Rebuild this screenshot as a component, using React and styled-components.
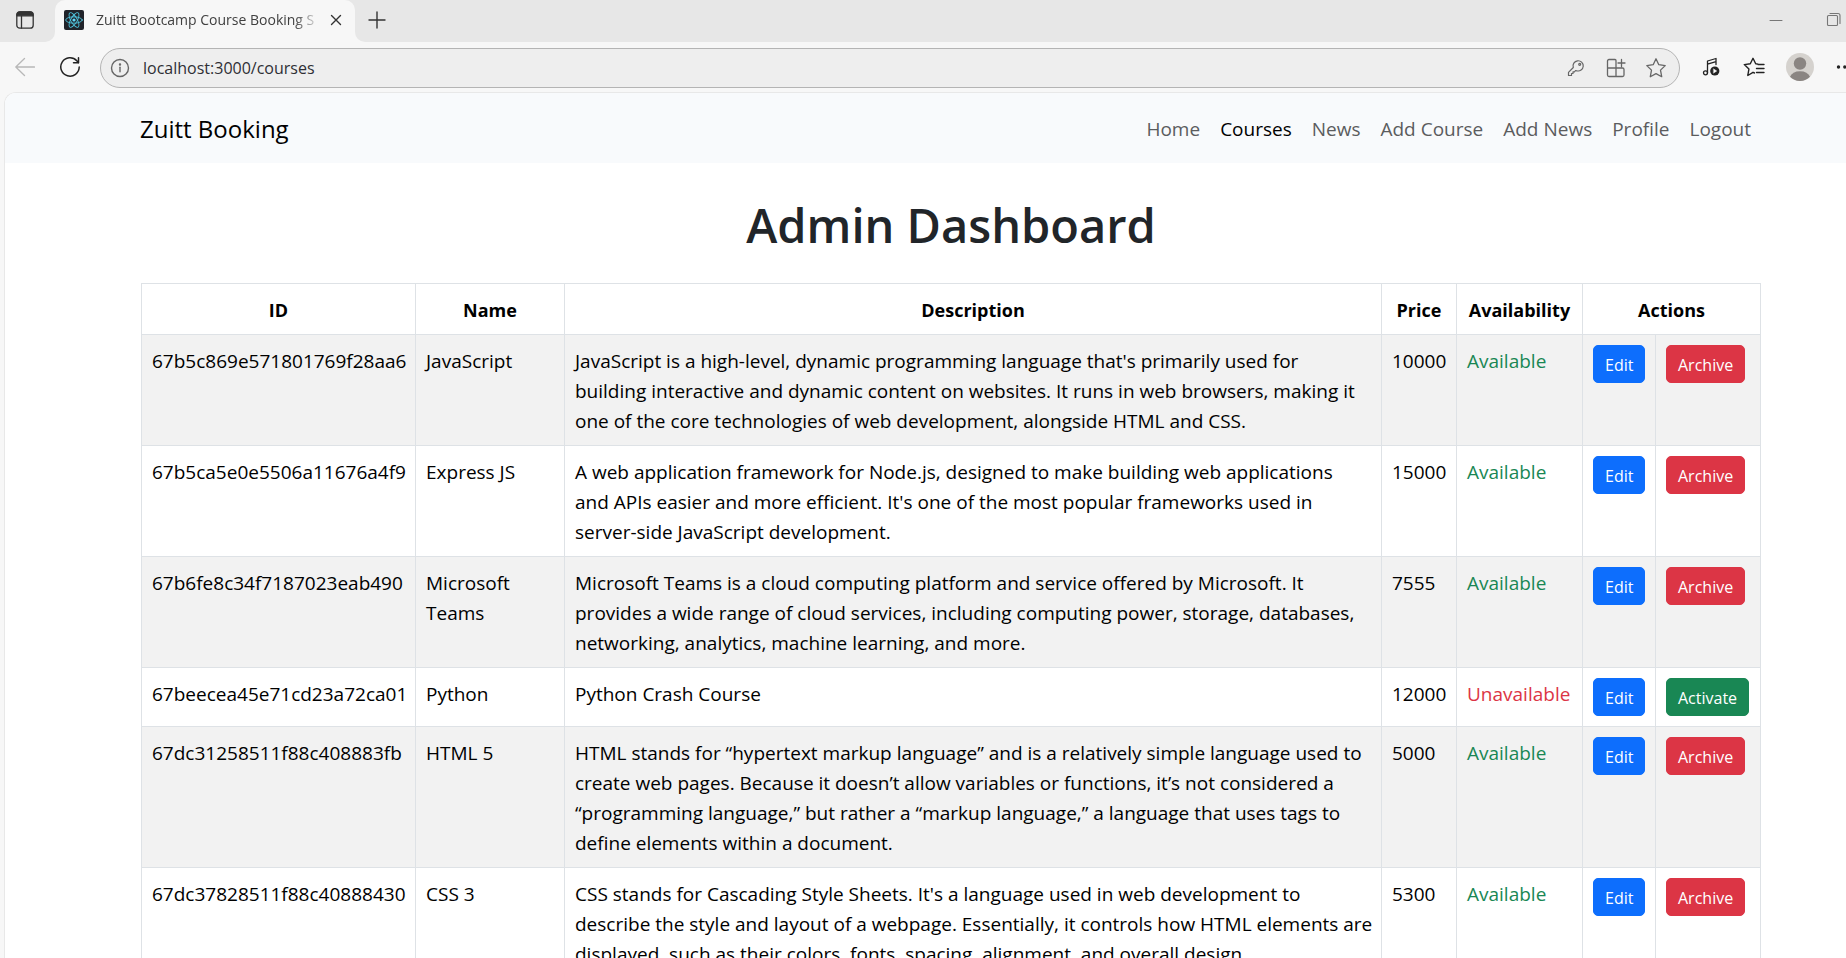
import React from "react";
import styled, { createGlobalStyle, css } from "styled-components";

const GlobalStyle = createGlobalStyle`
  *, *::before, *::after { box-sizing: border-box; }
  body {
    margin: 0;
    background: #f7f7f7;
    color: #212529;
    font-family: "Segoe UI", "Open Sans", "Noto Sans", sans-serif;
    font-size: 19px;
    line-height: 30px;
  }
  button, input { font-family: inherit; }
  svg { display: block; flex: none; }
`;

/* ---------- Browser frame ---------- */

const Window = styled.div`
  display: flex;
  flex-direction: column;
  height: 100vh;
  overflow: hidden;
`;

const TabStrip = styled.div`
  display: flex;
  height: 42px;
  flex: none;
`;

const StripStart = styled.div`
  display: flex;
  align-items: center;
  width: 55px;
  padding: 0 0 2px 15px;
  background: #e7e7e7;
  border-bottom-right-radius: 10px;
`;

const StripRest = styled.div`
  display: flex;
  flex: 1;
  align-items: center;
  padding: 0 4px 2px 12px;
  background: #e7e7e7;
  border-bottom-left-radius: 10px;
`;

const TabSlot = styled.div`
  width: 300px;
  background: linear-gradient(#e7e7e7 50%, #f7f7f7 50%);
`;

const Tab = styled.div`
  display: flex;
  align-items: center;
  height: 100%;
  padding: 0 13px 2px 9px;
  background: #f7f7f7;
  border-radius: 10px 10px 0 0;
`;

const TabTitle = styled.span`
  flex: 1;
  min-width: 0;
  margin: 0 9px 0 12px;
  overflow: hidden;
  color: #404040;
  font-size: 14px;
  line-height: 20px;
  white-space: nowrap;
  mask-image: linear-gradient(to right, #000 88%, transparent);
`;

const IconButton = styled.button`
  display: flex;
  flex: none;
  padding: 0;
  border: 0;
  background: none;
  color: ${(p) => p.$color || "#333"};
`;

const WindowControls = styled.div`
  display: flex;
  align-items: center;
  gap: 43px;
  margin-left: auto;
`;

const Toolbar = styled.div`
  display: flex;
  align-items: center;
  flex: none;
  height: 50px;
  padding-left: 15px;
`;

const History = styled.div`
  display: flex;
  gap: 25px;
  margin-right: 20px;
`;

const AddressBar = styled.label`
  display: flex;
  flex: 1;
  align-items: center;
  gap: 20px;
  height: 40px;
  margin-top: 2px;
  padding: 0 13px 0 9px;
  border: 1px solid #b4b4b4;
  border-radius: 20px;
  background: #eeeeee;
  color: #666;
`;

const AddressInput = styled.input`
  flex: 1;
  min-width: 0;
  margin-left: -7px;
  padding: 0;
  border: 0;
  outline: 0;
  background: none;
  color: #2f2f35;
  font-size: 16px;
  line-height: 24px;
`;

const Extensions = styled.div`
  display: flex;
  align-items: center;
  gap: 21px;
  margin-left: 22px;
`;

const Viewport = styled.main`
  flex: 1;
  min-height: 0;
  margin-left: 4px;
  overflow: hidden;
  border-top: 1px solid #e8e8e8;
  border-left: 1px solid #e8e8e8;
  border-top-left-radius: 12px;
  background: #fff;
`;

/* ---------- Page ---------- */

const Navbar = styled.nav`
  display: flex;
  align-items: center;
  justify-content: space-between;
  height: 70px;
  padding: 2px 85px 0 135px;
  background: #f8fafc;
`;

const Brand = styled.a`
  color: #000;
  font-size: 24px;
  line-height: 36px;
  text-decoration: none;
`;

const NavLinks = styled.div`
  display: flex;
`;

const NavLink = styled.a`
  padding: 0 10px;
  color: ${(p) => (p.$active ? "#000" : "#5b5c5e")};
  text-decoration: none;
`;

const Container = styled.section`
  padding: 32px 85px 0 136px;
`;

const Title = styled.h1`
  margin: 0 0 28px;
  color: #212529;
  font-size: 47px;
  font-weight: 600;
  line-height: 60px;
  text-align: center;
`;

const CourseTable = styled.table`
  width: 100%;
  border-collapse: collapse;
  table-layout: fixed;
  color: #000;
`;

const Column = styled.col`
  width: ${(p) => p.$width || "auto"};
`;

const cell = css`
  border: 1px solid #dee2e6;
`;

const HeadCell = styled.th`
  ${cell}
  padding: 11px 10px 9px;
  font-weight: 700;
  font-size: 18px;
`;

const Row = styled.tr`
  background: ${(p) => (p.$striped ? "#f2f2f2" : "#fff")};
`;

const Cell = styled.td`
  ${cell}
  padding: 11px 8px 9px 10px;
  vertical-align: top;
`;

const ActionCell = styled(Cell)`
  padding: 10px;
`;

const Status = styled.span`
  color: ${(p) => (p.$available ? "#198754" : "#dc3545")};
`;

const tones = { primary: "#0d6efd", danger: "#dc3545", success: "#198754" };

const ActionButton = styled.button`
  display: block;
  padding: 6px 11px 4px;
  border: 1px solid ${(p) => tones[p.$tone]};
  border-radius: 5px;
  background: ${(p) => tones[p.$tone]};
  color: #fff;
  font-size: 16px;
  line-height: 26px;
`;

/* ---------- Icons ---------- */

const Icon = ({ w = 20, h = w, sw = 1.3, children }) => (
  <svg width={w} height={h} viewBox={`0 0 ${w} ${h}`} fill="none" stroke="currentColor" strokeWidth={sw} strokeLinecap="round" strokeLinejoin="round" aria-hidden="true">
    {children}
  </svg>
);

const TabActionsIcon = () => (
  <Icon>
    <rect x="1.8" y="1.8" width="16.4" height="16.4" rx="3" />
    <path d="M2 4.500a3 3 0 0 1 3-2.700h10a3 3 0 0 1 3 2.700v1.300H2z" fill="currentColor" />
    <path d="M6.500 6v12" />
  </Icon>
);

const ReactIcon = () => (
  <Icon sw={0.9}>
    <rect width="20" height="20" rx="2" fill="#20232a" stroke="none" />
    <g stroke="#4fc3dd">
      <ellipse cx="10" cy="10" rx="8.300" ry="3.200" />
      <ellipse cx="10" cy="10" rx="8.300" ry="3.200" transform="rotate(60 10 10)" />
      <ellipse cx="10" cy="10" rx="8.300" ry="3.200" transform="rotate(120 10 10)" />
    </g>
    <circle cx="10" cy="10" r="1.600" fill="#61dafb" stroke="none" />
  </Icon>
);

const CloseIcon = () => <Icon w={12} sw={1.4}><path d="M1.500 1.500l9 9M10.500 1.500l-9 9" /></Icon>;
const PlusIcon = () => <Icon sw={1.4}><path d="M10 2v16M2 10h16" /></Icon>;
const MinimizeIcon = () => <Icon w={14} sw={1}><path d="M1 7.500h12" /></Icon>;
const RestoreIcon = () => (
  <Icon w={16} sw={1.100}>
    <rect x="1.500" y="3.500" width="10" height="10" rx="1" />
    <path d="M4 1.500h8a2 2 0 0 1 2 2v8" />
  </Icon>
);
const BackIcon = () => <Icon sw={1.300}><path d="M19.500 10H.8M9.500 1.500L.8 10l8.700 8.500" /></Icon>;
const ReloadIcon = () => (
  <Icon sw={1.500}>
    <path d="M19.200 10A9.200 9.200 0 1 1 16.800 3.800L18.300 5.600" />
    <path d="M18.500 .8v5h-5" />
  </Icon>
);
const InfoIcon = () => (
  <Icon sw={1.400}>
    <circle cx="10" cy="10" r="8.500" />
    <path d="M10 9.300v4.500" />
    <circle cx="10" cy="6.500" r=".5" fill="currentColor" />
  </Icon>
);
const KeyIcon = () => (
  <Icon sw={1.200}>
    <path d="M7.300 9.500A5.100 5.100 0 1 1 10.800 12.800L9.500 12.500 8.500 13.800H7v1.700H5.500v2H2.500v-3.200z" />
    <circle cx="13.700" cy="6.300" r="1" />
  </Icon>
);
const AppsIcon = () => (
  <Icon sw={1.300}>
    <path d="M10 10V2.500a1 1 0 0 0-1-1H3a1.500 1.500 0 0 0-1.500 1.500v14A1.500 1.500 0 0 0 3 18.500h13.500a1.500 1.500 0 0 0 1.500-1.500v-5.500a1.500 1.500 0 0 0-1.500-1.500zM1.500 10H10M10 10v8.500M15.500 1.500v7M12 5h7" />
  </Icon>
);
const StarIcon = () => (
  <Icon sw={1.300}>
    <path d="M10 .8l2.800 5.900 6.400.9-4.700 4.500 1.200 6.600L10 15.600l-5.700 3.100 1.200-6.600L.8 7.600l6.400-.9z" />
  </Icon>
);
const MusicIcon = () => (
  <Icon sw={1.300}>
    <ellipse cx="3.500" cy="15.800" rx="2" ry="2" />
    <path d="M5.500 15.800V4l8.500-2.500v6M5.500 7.200L14 4.700" />
    <circle cx="12.800" cy="14" r="4.600" fill="currentColor" stroke="none" />
    <path d="M11.700 12l3 2-3 2z" fill="#fff" stroke="#fff" strokeWidth=".5" />
  </Icon>
);
const FavoritesIcon = () => (
  <Icon w={22} h={20} sw={1.400}>
    <path d="M11.500 16l-1.500-.7-5.200 3.200 1.100-6.400L1.300 7.600l6-.9L10 1.300l2.700 5.400 2.300.4M15 7.500h6M13.500 11.500h7.500M13.500 15.500h7.500" />
  </Icon>
);
const AvatarIcon = () => (
  <svg width="28" height="28" viewBox="0 0 28 28" aria-hidden="true">
    <circle cx="14" cy="14" r="14" fill="#d5d2ce" />
    <circle cx="14" cy="10.500" r="6.200" fill="#8a8582" />
    <path d="M4 23.800a10.500 8 0 0 1 20 0A14 14 0 0 1 4 23.800z" fill="#8a8582" />
  </svg>
);
const MoreIcon = () => (
  <Icon w={11} h={20}>
    <circle cx="3.500" cy="10" r="1.700" fill="currentColor" stroke="none" />
    <circle cx="9.800" cy="10" r="1.700" fill="currentColor" stroke="none" />
  </Icon>
);

/* ---------- Data ---------- */

const links = ["Home", "Courses", "News", "Add Course", "Add News", "Profile", "Logout"];

const courses = [
  { id: "67b5c869e571801769f28aa6", name: "JavaScript", price: 10000, available: true,
    description: "JavaScript is a high-level, dynamic programming language that's primarily used for building interactive and dynamic content on websites. It runs in web browsers, making it one of the core technologies of web development, alongside HTML and CSS." },
  { id: "67b5ca5e0e5506a11676a4f9", name: "Express JS", price: 15000, available: true,
    description: "A web application framework for Node.js, designed to make building web applications and\u00a0APIs easier and more efficient. It's one of the most popular frameworks used in server-side JavaScript development." },
  { id: "67b6fe8c34f7187023eab490", name: "Microsoft Teams", price: 7555, available: true,
    description: "Microsoft Teams is a cloud computing platform and service offered by Microsoft. It provides a wide range of cloud services, including computing power, storage, databases, networking, analytics, machine learning, and more." },
  { id: "67beecea45e71cd23a72ca01", name: "Python", price: 12000, available: false,
    description: "Python Crash Course" },
  { id: "67dc31258511f88c408883fb", name: "HTML 5", price: 5000, available: true,
    description: "HTML stands for “hypertext markup language” and is a relatively simple language used to create web pages. Because it doesn’t allow variables or functions, it’s not considered a “programming language,” but rather a “markup language,” a language that uses tags to define elements within a document." },
  { id: "67dc37828511f88c40888430", name: "CSS 3", price: 5300, available: true,
    description: "CSS stands for Cascading Style Sheets. It's a language used in web development to describe the style and layout of a webpage. Essentially, it controls how HTML elements are displayed, such as their colors, fonts, spacing, alignment, and overall design." },
];

const BrowserChrome = () => (
  <>
    <TabStrip>
      <StripStart>
        <IconButton aria-label="Tab actions"><TabActionsIcon /></IconButton>
      </StripStart>
      <TabSlot>
        <Tab>
          <ReactIcon />
          <TabTitle>Zuitt Bootcamp Course Booking S</TabTitle>
          <IconButton aria-label="Close tab"><CloseIcon /></IconButton>
        </Tab>
      </TabSlot>
      <StripRest>
        <IconButton aria-label="New tab"><PlusIcon /></IconButton>
        <WindowControls>
          <IconButton $color="#777" aria-label="Minimize"><MinimizeIcon /></IconButton>
          <IconButton $color="#777" aria-label="Restore"><RestoreIcon /></IconButton>
        </WindowControls>
      </StripRest>
    </TabStrip>
    <Toolbar>
      <History>
        <IconButton $color="#b8b8b8" aria-label="Back"><BackIcon /></IconButton>
        <IconButton $color="#222" aria-label="Reload"><ReloadIcon /></IconButton>
      </History>
      <AddressBar>
        <InfoIcon />
        <AddressInput aria-label="Address" defaultValue="localhost:3000/courses" />
        <KeyIcon />
        <AppsIcon />
        <StarIcon />
      </AddressBar>
      <Extensions>
        <IconButton $color="#222" aria-label="Media control"><MusicIcon /></IconButton>
        <IconButton $color="#222" aria-label="Favorites"><FavoritesIcon /></IconButton>
        <IconButton aria-label="Profile"><AvatarIcon /></IconButton>
        <IconButton $color="#222" aria-label="More"><MoreIcon /></IconButton>
      </Extensions>
    </Toolbar>
  </>
);

const CourseRow = ({ course, striped }) => (
  <Row $striped={striped}>
    <Cell>{course.id}</Cell>
    <Cell>{course.name}</Cell>
    <Cell>{course.description}</Cell>
    <Cell>{course.price}</Cell>
    <Cell><Status $available={course.available}>{course.available ? "Available" : "Unavailable"}</Status></Cell>
    <ActionCell><ActionButton $tone="primary">Edit</ActionButton></ActionCell>
    <ActionCell>
      <ActionButton $tone={course.available ? "danger" : "success"}>
        {course.available ? "Archive" : "Activate"}
      </ActionButton>
    </ActionCell>
  </Row>
);

export default function App() {
  return (
    <Window>
      <GlobalStyle />
      <BrowserChrome />
      <Viewport>
        <Navbar>
          <Brand href="#home">Zuitt Booking</Brand>
          <NavLinks>
            {links.map((label) => (
              <NavLink key={label} href="#nav" $active={label === "Courses"}>{label}</NavLink>
            ))}
          </NavLinks>
        </Navbar>
        <Container>
          <Title>Admin Dashboard</Title>
          <CourseTable>
            <colgroup>
              <Column $width="274px" />
              <Column $width="149px" />
              <Column />
              <Column $width="75px" />
              <Column $width="126px" />
              <Column $width="73px" />
              <Column $width="105px" />
            </colgroup>
            <thead>
              <tr>
                <HeadCell>ID</HeadCell>
                <HeadCell>Name</HeadCell>
                <HeadCell>Description</HeadCell>
                <HeadCell>Price</HeadCell>
                <HeadCell>Availability</HeadCell>
                <HeadCell colSpan={2}>Actions</HeadCell>
              </tr>
            </thead>
            <tbody>
              {courses.map((course, i) => (
                <CourseRow key={course.id} course={course} striped={i % 2 === 0} />
              ))}
            </tbody>
          </CourseTable>
        </Container>
      </Viewport>
    </Window>
  );
}
